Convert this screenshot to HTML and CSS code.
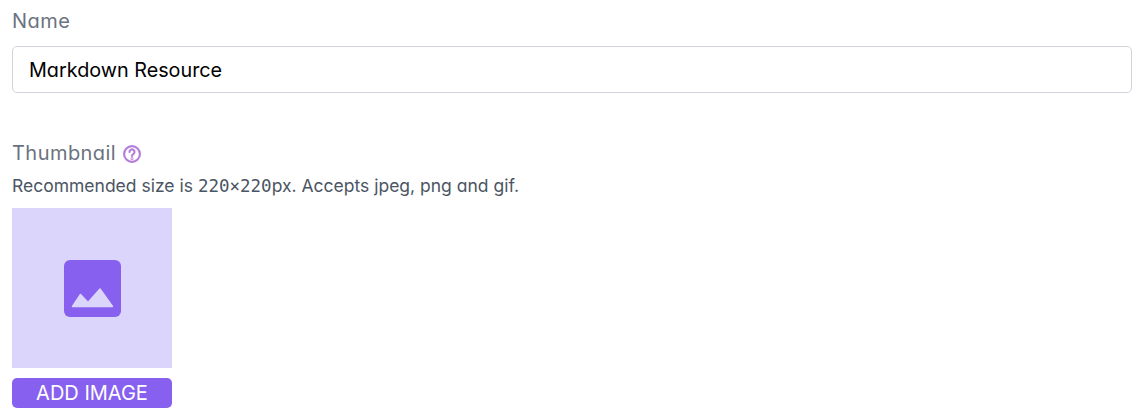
FILE: index.html
```html
<!DOCTYPE html>
<html lang="en">
  <head>
    <meta charset="UTF-8" />
    <title>Resource</title>
    <link rel="stylesheet" href="styles.css">
  </head>
  <body>
    <div class="form">
      <div class="field field-name">
        <label class="label">Name</label>
        <input class="input" type="text" value="Markdown Resource" />
      </div>
      <div class="field">
        <div class="label label-row">
          <span>Thumbnail</span>
          <svg class="help" viewBox="0 0 24 24" width="20" height="20" fill="none" stroke="#b57edc" stroke-width="2.6" stroke-linecap="round">
            <circle cx="12" cy="12" r="9.5" />
            <path d="M9 9.6a3 3 0 1 1 4.6 2.5c-1 .7-1.6 1.2-1.6 2.3" />
            <circle cx="12" cy="17.4" r=".5" />
          </svg>
        </div>
        <p class="hint">Recommended size is <span class="mono">220×220</span>px. Accepts jpeg, png and gif.</p>
        <div class="thumb">
          <svg viewBox="0 0 57 57" width="57" height="57">
            <rect width="57" height="57" rx="6" fill="#8860f0" />
            <path d="M8.5 46.5 L16.5 34.5 L24 42.5 L36 29 L48.5 46.5 Z" fill="#dcd5fb" stroke="#dcd5fb" stroke-width="1.5" stroke-linejoin="round" />
          </svg>
        </div>
        <button class="btn">ADD IMAGE</button>
      </div>
    </div>
  </body>
</html>
```

FILE: styles.css
```css
* {
  box-sizing: border-box;
}
body {
  margin: 0;
  padding: 0;
  background: #fff;
  font-family: Inter, "Noto Sans", sans-serif;
  font-feature-settings: "cv11";
}
.form {
  width: 1120px;
  margin-left: 12px;
  padding-top: 9px;
}
.field-name {
  margin-bottom: 47px;
}
.label {
  display: block;
  height: 25px;
  margin-bottom: 12px;
  font-size: 20px;
  line-height: 25px;
  letter-spacing: 0.45px;
  color: #6b7280;
}
.label-row {
  display: flex;
  align-items: center;
  gap: 6px;
  height: 26px;
  margin-bottom: 10px;
}
.help {
  margin-top: 1px;
}
.input {
  display: block;
  width: 100%;
  height: 47px;
  padding: 0 16px;
  border: 1px solid #d1d5db;
  border-radius: 5px;
  outline: none;
  font-family: inherit;
  font-feature-settings: inherit;
  font-size: 19.8px;
  color: #000;
}
.hint {
  margin: 0 0 12px;
  font-size: 17.5px;
  line-height: 20px;
  color: #4b5563;
}
.mono {
  font-family: "DejaVu Sans Mono", monospace;
  font-size: 17.5px;
}
.thumb {
  display: flex;
  align-items: center;
  justify-content: center;
  width: 160px;
  height: 160px;
  margin-bottom: 10px;
  background: #dcd5fb;
}
.btn {
  display: block;
  width: 160px;
  height: 30px;
  padding: 0;
  border: 0;
  border-radius: 5px;
  background: #8860f0;
  font-family: inherit;
  font-feature-settings: inherit;
  font-size: 20px;
  color: #fff;
}
```
